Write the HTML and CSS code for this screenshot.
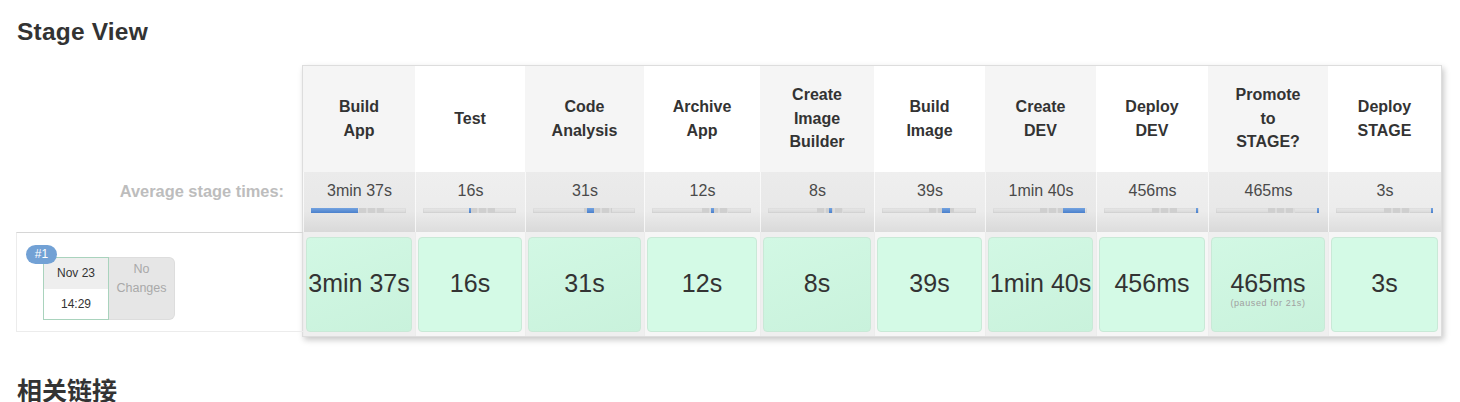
FILE: index.html
```html
<!DOCTYPE html>
<html lang="en">
<head>
<meta charset="utf-8">
<title>Stage View</title>
<link rel="stylesheet" href="styles.css">
</head>
<body>
<h2 class="title">Stage View</h2>
<div class="stage-view">
  <div class="side">
    <div class="side-head"></div>
    <div class="side-avg">Average stage times:</div>
    <div class="build">
      <span class="badge">#1</span>
      <div class="build-info">
        <div class="date">
          <div class="date-day">Nov 23</div>
          <div class="date-time">14:29</div>
        </div>
        <div class="changes">No<br>Changes</div>
      </div>
    </div>
  </div>
  <div class="table">
    <div class="col alt">
      <div class="head">Build<br>App</div>
      <div class="avg"><div class="avg-time">3min 37s</div><div class="bar"><span class="ticks"></span><span class="fill" style="left:0;width:49%"></span></div></div>
      <div class="result"><div class="cell">3min 37s</div></div>
    </div>
    <div class="col">
      <div class="head">Test</div>
      <div class="avg"><div class="avg-time">16s</div><div class="bar"><span class="ticks"></span><span class="fill" style="left:49%;width:3%"></span></div></div>
      <div class="result"><div class="cell">16s</div></div>
    </div>
    <div class="col alt">
      <div class="head">Code<br>Analysis</div>
      <div class="avg"><div class="avg-time">31s</div><div class="bar"><span class="ticks"></span><span class="fill" style="left:53%;width:7%"></span></div></div>
      <div class="result"><div class="cell">31s</div></div>
    </div>
    <div class="col">
      <div class="head">Archive<br>App</div>
      <div class="avg"><div class="avg-time">12s</div><div class="bar"><span class="ticks"></span><span class="fill" style="left:59.5%;width:3%"></span></div></div>
      <div class="result"><div class="cell">12s</div></div>
    </div>
    <div class="col alt">
      <div class="head">Create<br>Image<br>Builder</div>
      <div class="avg"><div class="avg-time">8s</div><div class="bar"><span class="ticks"></span><span class="fill" style="left:63%;width:2.5%"></span></div></div>
      <div class="result"><div class="cell">8s</div></div>
    </div>
    <div class="col">
      <div class="head">Build<br>Image</div>
      <div class="avg"><div class="avg-time">39s</div><div class="bar"><span class="ticks"></span><span class="fill" style="left:64%;width:8.5%"></span></div></div>
      <div class="result"><div class="cell">39s</div></div>
    </div>
    <div class="col alt">
      <div class="head">Create<br>DEV</div>
      <div class="avg"><div class="avg-time">1min 40s</div><div class="bar"><span class="ticks"></span><span class="fill" style="left:74%;width:24%"></span></div></div>
      <div class="result"><div class="cell">1min 40s</div></div>
    </div>
    <div class="col">
      <div class="head">Deploy<br>DEV</div>
      <div class="avg"><div class="avg-time">456ms</div><div class="bar"><span class="ticks"></span><span class="fill" style="left:96.5%;width:2%"></span></div></div>
      <div class="result"><div class="cell">456ms</div></div>
    </div>
    <div class="col alt">
      <div class="head">Promote<br>to<br>STAGE?</div>
      <div class="avg"><div class="avg-time">465ms</div><div class="bar"><span class="ticks"></span><span class="fill" style="left:98%;width:1.5%"></span></div></div>
      <div class="result"><div class="cell">465ms<span class="paused">(paused for 21s)</span></div></div>
    </div>
    <div class="col">
      <div class="head">Deploy<br>STAGE</div>
      <div class="avg"><div class="avg-time">3s</div><div class="bar"><span class="ticks"></span><span class="fill" style="left:99%;width:1%"></span></div></div>
      <div class="result"><div class="cell">3s</div></div>
    </div>
  </div>
</div>
<h2 class="links">相关链接</h2>
</body>
</html>
```

FILE: styles.css
```css
html, body {
  margin: 0;
  padding: 0;
  background: #ffffff;
}

body {
  font-family: "Liberation Sans", Arial, "Noto Sans CJK SC", sans-serif;
  color: #333333;
  overflow: hidden;
}

.title {
  margin: 0;
  padding: 16px 0 0 17px;
  font-size: 24.5px;
  line-height: 32px;
  font-weight: bold;
  color: #333333;
  letter-spacing: 0.2px;
}

.stage-view {
  display: flex;
  margin: 18px 0 0 16px;
}

.side {
  width: 287px;
  display: flex;
  flex-direction: column;
}

.side-head {
  height: 106px;
}

.side-avg {
  height: 60px;
  box-sizing: border-box;
  padding: 9px 19px 0 0;
  text-align: right;
  font-size: 16.4px;
  line-height: 20px;
  font-weight: bold;
  color: #bdbdbd;
}

.build {
  position: relative;
  height: 100px;
  box-sizing: border-box;
  border-top: 1px solid #d6d6d6;
  border-left: 1px solid #ececec;
  border-bottom: 1px solid #ececec;
  padding: 24px 0 0 26px;
}

.badge {
  position: absolute;
  left: 9px;
  top: 12px;
  width: 31px;
  height: 19px;
  border-radius: 10px;
  background: #72a1d5;
  color: #ffffff;
  font-size: 12px;
  line-height: 19px;
  text-align: center;
  z-index: 2;
}

.build-info {
  display: flex;
  height: 63px;
}

.date {
  width: 66px;
  box-sizing: border-box;
  border: 1px solid #a9d3bd;
  display: flex;
  flex-direction: column;
  background: #ffffff;
}

.date-day,
.date-time {
  flex: 1;
  display: flex;
  align-items: center;
  justify-content: center;
  font-size: 12px;
  color: #333333;
}

.date-day {
  background: #eeeeee;
}

.changes {
  width: 66px;
  box-sizing: border-box;
  background: #e6e6e6;
  border: 1px solid #dddddd;
  border-left: none;
  border-radius: 0 6px 6px 0;
  padding-top: 2px;
  text-align: center;
  font-size: 12.5px;
  line-height: 19px;
  color: #a9a9a9;
}

.table {
  display: grid;
  grid-template-columns: 112px 110px 119px 116px 114px 111px 111px 112px 120px 113px;
  box-shadow: 0 0 0 1px #dddddd, 2px 3px 6px 1px rgba(0, 0, 0, 0.22);
  background: #ffffff;
}

.col {
  display: flex;
  flex-direction: column;
}

.head {
  height: 106px;
  display: flex;
  align-items: center;
  justify-content: center;
  text-align: center;
  font-size: 16px;
  line-height: 23.5px;
  font-weight: bold;
  color: #333333;
  background: #ffffff;
  padding-bottom: 1px;
  box-sizing: border-box;
}

.alt .head {
  background: #f5f5f5;
}

.avg {
  height: 60px;
  box-sizing: border-box;
  padding-top: 9px;
  border-left: 1px solid rgba(255, 255, 255, 0.7);
  background: linear-gradient(#efefef 0%, #ececec 65%, #dddddd 100%);
}

.alt .avg {
  background: linear-gradient(#ebebeb 0%, #e8e8e8 65%, #d9d9d9 100%);
}

.avg-time {
  text-align: center;
  font-size: 16px;
  line-height: 20px;
  color: #4a4a4a;
}

.bar {
  position: relative;
  height: 5px;
  margin: 7px 9px 0 7px;
  background: linear-gradient(#e8e8e8, #d8d8d8);
  box-shadow: inset 0 0 0 1px rgba(0, 0, 0, 0.03);
}

.ticks {
  position: absolute;
  top: 0;
  bottom: 0;
  left: 50%;
  width: 27%;
  background: repeating-linear-gradient(90deg, #cfcfcf 0, #cfcfcf 7px, #dcdcdc 7px, #dcdcdc 9px);
}

.fill {
  position: absolute;
  top: 0;
  bottom: 0;
  min-width: 2px;
  background: linear-gradient(#74a3e0, #4a80cc);
}

.result {
  height: 104px;
  box-sizing: border-box;
  padding: 5px 3px 4px 2px;
  background: #f6f6f6;
  border-left: 1px solid #ececec;
}

.alt .result {
  background: #efefef;
}

.cell {
  position: relative;
  height: 100%;
  box-sizing: border-box;
  border: 1px solid #c9e9d7;
  border-radius: 4px;
  background: #d4fae6;
  display: flex;
  align-items: center;
  justify-content: center;
  padding-bottom: 3px;
  font-size: 25px;
  color: #333333;
  white-space: nowrap;
}

.alt .cell {
  background: linear-gradient(160deg, #d2f8e4, #c9f2dc);
}

.paused {
  position: absolute;
  left: 0;
  right: 0;
  top: 60px;
  text-align: center;
  font-size: 9px;
  letter-spacing: 0.6px;
  color: #a0a0a0;
}

.links {
  margin: 39px 0 0 17px;
  font-family: "Liberation Sans", "Noto Sans CJK SC", sans-serif;
  font-size: 25px;
  line-height: 32px;
  font-weight: bold;
  color: #333333;
}
```
